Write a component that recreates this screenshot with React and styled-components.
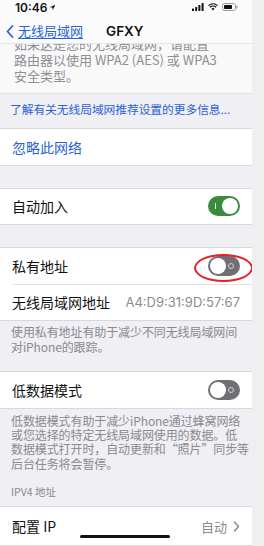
import React from "react";
import styled, { createGlobalStyle } from "styled-components";

const Global = createGlobalStyle`
  html, body { margin: 0; padding: 0; background: #efefef; }
  body { font-family: "Noto Sans CJK SC", "Noto Sans", sans-serif; -webkit-font-smoothing: antialiased; }
`;

const Screen = styled.div`
  width: 252px;
  height: 546px;
  overflow: hidden;
  background: #efeff4;
  display: flex;
  flex-direction: column;
  position: relative;
`;

const StatusBar = styled.div`
  height: 16px;
  background: #fbfbfb;
  display: flex;
  align-items: center;
  justify-content: space-between;
  padding: 0 14px 0 15px;
`;

const Time = styled.div`
  font-family: Inter, "Liberation Sans", sans-serif;
  font-weight: 600;
  font-size: 12px;
  color: #111;
  display: flex;
  align-items: center;
  gap: 2px;
  margin-top: -1px;
`;

const StatusIcons = styled.div`
  display: flex;
  align-items: center;
  gap: 4px;
  margin-top: -1px;
`;

const NavBar = styled.div`
  height: 30px;
  background: #fbfbfb;
  border-bottom: 1px solid #e6e6e6;
  display: flex;
  align-items: center;
  padding: 4px 0 0 6px;
  box-sizing: border-box;
`;

const Back = styled.div`
  display: flex;
  align-items: center;
  color: #2b62d6;
  font-size: 13px;
  line-height: 16px;
  gap: 4px;
  span { text-decoration: underline; text-underline-offset: 2px; }
`;

const Title = styled.div`
  font-family: Inter, "Liberation Sans", sans-serif;
  font-weight: 600;
  font-size: 13.5px;
  line-height: 16px;
  color: #111;
  margin-left: 23px;
`;

const TopText = styled.div`
  height: 51px;
  overflow: hidden;
  background: #f9f9f9;
  padding-left: 14px;
  color: #8e8e93;
  font-size: 13px;
  line-height: 16px;
  div:first-child { margin-top: -8px; }
`;

const LinkArea = styled.div`
  height: 36px;
  display: flex;
  align-items: center;
  padding: 0 0 4px 10px;
  color: #2b62d6;
  font-size: 11.8px;
  letter-spacing: -0.1px;
  border-top: 1px solid #e3e3e8;
  box-sizing: border-box;
  white-space: nowrap;
`;

const Group = styled.div`
  background: #fff;
  border-top: 0.5px solid #d8d8dc;
  border-bottom: 0.5px solid #d8d8dc;
  margin-top: ${p => p.$mt || 0}px;
`;

const Row = styled.div`
  height: ${p => p.$h || 36}px;
  display: flex;
  align-items: center;
  justify-content: space-between;
  padding: 0 12px;
  position: relative;
  font-size: 14px;
  color: ${p => (p.$link ? "#2b62d6" : "#111")};
  & + & { border-top: 0.5px solid #e2e2e6; margin-left: 12px; padding-left: 0; }
`;

const Value = styled.div`
  color: #8a8a8f;
  font-size: 13px;
  font-family: ${p => (p.$mono ? 'Inter, "Liberation Sans", sans-serif' : "inherit")};
  display: flex;
  align-items: center;
  gap: 6px;
`;

const Footer = styled.div`
  padding: ${p => p.$pt}px 10px 0 11px;
  height: ${p => p.$h}px;
  box-sizing: border-box;
  color: #8a8a8f;
  font-size: 12px;
  line-height: ${p => p.$lh}px;
  letter-spacing: -0.1px;
  white-space: nowrap;
`;

const SectionLabel = styled.div`
  height: 29px;
  box-sizing: border-box;
  padding: 6px 0 0 11px;
  color: #8a8a8f;
  font-size: 10.5px;
`;

const Track = styled.div`
  width: 32px;
  height: 20px;
  border-radius: 10px;
  background: ${p => (p.$on ? "#3b8a3f" : "#707074")};
  position: relative;
  &::before {
    content: "";
    position: absolute;
    top: 2px;
    ${p => (p.$on ? "right: 2px;" : "left: 2px;")}
    width: 16px;
    height: 16px;
    border-radius: 50%;
    background: #fff;
  }
  &::after {
    content: "";
    position: absolute;
    ${p =>
      p.$on
        ? "left: 7px; top: 7px; width: 1px; height: 6px; background: #e8f3e8;"
        : "right: 6px; top: 7px; width: 4px; height: 4px; border: 1px solid #d2d2d4; border-radius: 50%;"}
  }
`;

const Highlight = styled.div`
  position: absolute;
  right: -1px;
  top: 6px;
  width: 55px;
  height: 24px;
  border: 2.5px solid #e3232b;
  border-radius: 50%;
`;

const HomeBar = styled.div`
  position: absolute;
  left: 80px;
  bottom: 8px;
  width: 90px;
  height: 3px;
  border-radius: 2px;
  background: #111;
`;

export default function App() {
  return (
    <>
      <Global />
      <Screen>
        <StatusBar>
          <Time>
            10:46
            <svg width="7" height="7" viewBox="0 0 10 10">
              <path d="M9 1 L1 4.5 L5 5 L5.5 9 Z" fill="#111" />
            </svg>
          </Time>
          <StatusIcons>
            <svg width="12" height="8" viewBox="0 0 12 8">
              <rect x="0" y="5.5" width="2" height="2.5" rx="0.5" fill="#111" />
              <rect x="3.2" y="4" width="2" height="4" rx="0.5" fill="#111" />
              <rect x="6.4" y="2" width="2" height="6" rx="0.5" fill="#111" />
              <rect x="9.6" y="0" width="2" height="8" rx="0.5" fill="#111" />
            </svg>
            <svg width="10" height="8" viewBox="0 0 10 8">
              <path d="M5 7.5 L3.4 5.8 A2.4 2.4 0 0 1 6.6 5.8 Z" fill="#111" />
              <path d="M1.9 4.3 A4.4 4.4 0 0 1 8.1 4.3" stroke="#111" strokeWidth="1.2" fill="none" />
              <path d="M0.5 2.6 A6.4 6.4 0 0 1 9.5 2.6" stroke="#111" strokeWidth="1.2" fill="none" />
            </svg>
            <svg width="16" height="8" viewBox="0 0 16 8">
              <rect x="0.5" y="0.5" width="13" height="7" rx="2" stroke="#999" fill="none" />
              <rect x="2" y="2" width="8" height="4" rx="0.8" fill="#111" />
              <rect x="14.3" y="2.6" width="1.2" height="2.8" rx="0.5" fill="#999" />
            </svg>
          </StatusIcons>
        </StatusBar>
        <NavBar>
          <Back>
            <svg width="8" height="13" viewBox="0 0 8 13">
              <path d="M6.5 1 L1.5 6.5 L6.5 12" stroke="#2b62d6" strokeWidth="1.8" fill="none" strokeLinecap="round" strokeLinejoin="round" />
            </svg>
            <span>无线局域网</span>
          </Back>
          <Title>GFXY</Title>
        </NavBar>
        <TopText>
          <div>如果这是您的无线局域网，请配置</div>
          <div>路由器以使用 WPA2 (AES) 或 WPA3</div>
          <div>安全类型。</div>
        </TopText>
        <LinkArea>了解有关无线局域网推荐设置的更多信息...</LinkArea>
        <Group>
          <Row $link>忽略此网络</Row>
        </Group>
        <Group $mt={22}>
          <Row $h={35}>
            自动加入
            <Track $on />
          </Row>
        </Group>
        <Group $mt={22}>
          <Row>
            私有地址
            <Track />
            <Highlight />
          </Row>
          <Row $h={35}>
            无线局域网地址
            <Value $mono>A4:D9:31:9D:57:67</Value>
          </Row>
        </Group>
        <Footer $pt={3} $h={52} $lh={15.5}>
          <div>使用私有地址有助于减少不同无线局域网间</div>
          <div>对iPhone的跟踪。</div>
        </Footer>
        <Group>
          <Row>
            低数据模式
            <Track />
          </Row>
        </Group>
        <Footer $pt={5} $h={72} $lh={14.3}>
          <div>低数据模式有助于减少iPhone通过蜂窝网络</div>
          <div>或您选择的特定无线局域网使用的数据。低</div>
          <div>数据模式打开时，自动更新和“照片”同步等</div>
          <div>后台任务将会暂停。</div>
        </Footer>
        <SectionLabel>IPV4 地址</SectionLabel>
        <Group>
          <Row $h={38}>
            配置 IP
            <Value>
              自动
              <svg width="7" height="11" viewBox="0 0 7 11">
                <path d="M1.5 1 L5.5 5.5 L1.5 10" stroke="#8a8a8f" strokeWidth="1.5" fill="none" strokeLinecap="round" strokeLinejoin="round" />
              </svg>
            </Value>
          </Row>
        </Group>
        <HomeBar />
      </Screen>
    </>
  );
}
